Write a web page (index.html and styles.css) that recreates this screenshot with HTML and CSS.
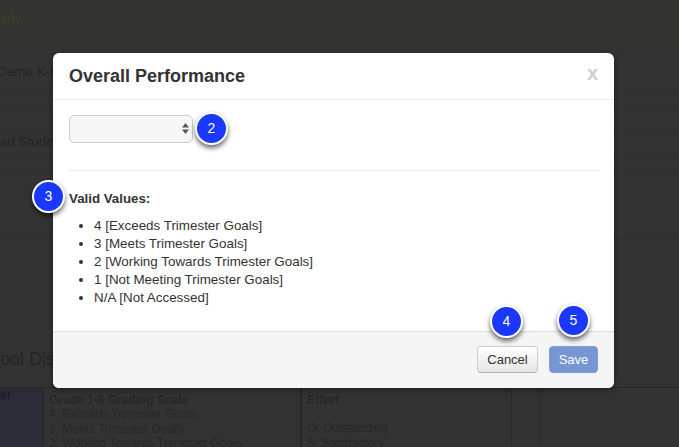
FILE: index.html
```html
<!DOCTYPE html>
<html lang="en">
<head>
  <meta charset="UTF-8" />
  <title>Overall Performance</title>
  <link rel="stylesheet" href="styles.css">
</head>
<body>

  <div class="page">
    <div class="notice">arly.</div>
    <div class="row row-a"><span class="row-text">Demo K-6</span></div>
    <div class="row row-b"></div>
    <div class="row row-c"></div>
    <div class="row row-d">ad Student</div>
    <div class="row row-e"></div>
    <div class="row row-f"></div>
    <div class="district">ool District</div>

    <div class="scale">
      <div class="scale-col scale-first"><b>er</b></div>
      <div class="scale-col">
        <b>Grade 1-6 Grading Scale</b>
        <div>4: Exceeds Trimester Goals</div>
        <div>3: Meets Trimester Goals</div>
        <div>2: Working Towards Trimester Goals</div>
      </div>
      <div class="scale-col scale-effort">
        <b>Effort</b>
        <div class="effort-gap">O: Outstanding</div>
        <div>S: Satisfactory</div>
      </div>
      <div class="scale-col scale-thin"></div>
      <div class="scale-col scale-last"></div>
    </div>
  </div>

  <div class="modal">
    <div class="modal-header">
      <h3>Overall Performance</h3>
      <span class="close">x</span>
    </div>

    <div class="modal-body">
      <div class="select-wrap">
        <select class="value-select"><option></option></select>
        <svg class="select-arrows" width="7" height="11" viewBox="0 0 7 11">
          <path d="M3.5 0L7 4.5H0z" fill="#555" />
          <path d="M3.5 11L0 6.5h7z" fill="#555" />
        </svg>
      </div>
      <hr class="divider" />
      <p class="values-title">Valid Values:</p>
      <ul class="values">
        <li>4 [Exceeds Trimester Goals]</li>
        <li>3 [Meets Trimester Goals]</li>
        <li>2 [Working Towards Trimester Goals]</li>
        <li>1 [Not Meeting Trimester Goals]</li>
        <li>N/A [Not Accessed]</li>
      </ul>
    </div>

    <div class="modal-footer">
      <button class="btn btn-cancel">Cancel</button>
      <button class="btn btn-save">Save</button>
    </div>

    <div class="badge badge-2">2</div>
    <div class="badge badge-3">3</div>
    <div class="badge badge-4">4</div>
    <div class="badge badge-5">5</div>
  </div>

</body>
</html>
```

FILE: styles.css
```css
html, body {
  height: 100%;
}

body {
  font-family: "Liberation Sans", Arial, sans-serif;
  background: #333;
  margin: 0;
  padding: 0;
  overflow: hidden;
  color: #222;
}

.page {
  height: 447px;
  overflow: hidden;
}

.notice {
  height: 55px;
  background: #33332f;
  font-size: 13px;
  line-height: 38px;
  color: #453e30;
  border-bottom: 1px solid #2f2f2f;
  box-sizing: border-box;
}

.row {
  border-bottom: 1px solid #2e2e2e;
  box-sizing: border-box;
  font-size: 13.4px;
  color: #232323;
  white-space: nowrap;
}

.row-text {
  display: inline-block;
  margin-left: -3px;
}

.row-a { height: 35px; line-height: 34px; }
.row-b { height: 19px; }
.row-c { height: 20px; }
.row-d { height: 27px; line-height: 26px; }
.row-e { height: 20px; }
.row-f { height: 62px; }

.district {
  height: 150px;
  box-sizing: border-box;
  padding-top: 107px;
  border-bottom: 1px solid #262626;
  font-size: 18px;
  line-height: 28px;
  color: #252525;
  white-space: nowrap;
}

.scale {
  display: grid;
  grid-template-columns: 44px 257px 211px 29px 1fr;
  height: 60px;
  font-size: 12px;
  line-height: 14.5px;
  color: #272727;
}

.scale-col {
  padding: 6px 5px 0;
  border-right: 1px solid #292929;
  white-space: nowrap;
  overflow: hidden;
}

.scale-col b {
  display: block;
  line-height: 13px;
}

.scale-first {
  background: #2b2c38;
  color: #1c1c1c;
  padding: 1px 0 0;
}

.scale-effort {
  border-left: 1px solid #262626;
}

.effort-gap {
  margin-top: 14px;
}

.scale-last {
  border-right: 0;
}

.modal {
  position: absolute;
  left: 53px;
  top: 53px;
  width: 561px;
  height: 335px;
  display: flex;
  flex-direction: column;
  background: #fff;
  border-radius: 6px;
  box-shadow: 0 2px 6px rgba(0, 0, 0, 0.45);
  color: #333;
}

.modal-header {
  display: flex;
  justify-content: space-between;
  align-items: flex-start;
  height: 47px;
  box-sizing: border-box;
  padding: 0 16px;
  border-bottom: 1px solid #eee;
}

.modal-header h3 {
  margin: 0;
  font-size: 18px;
  line-height: 47px;
  font-weight: bold;
}

.close {
  font-size: 20px;
  line-height: 40px;
  font-weight: bold;
  color: #cfcfcf;
}

.modal-body {
  flex: 1;
  padding: 15px 15px 0 16px;
}

.select-wrap {
  position: relative;
  width: 124px;
  height: 28px;
}

.value-select {
  display: block;
  appearance: none;
  width: 100%;
  height: 100%;
  background: #f6f6f6;
  border: 1px solid #ccc;
  border-radius: 5px;
}

.select-arrows {
  position: absolute;
  right: 4px;
  top: 8px;
}

.divider {
  margin: 27px 0 0;
  border: 0;
  border-top: 1px solid #eee;
}

.values-title {
  margin: 20px 0 0;
  font-size: 13.3px;
  line-height: 16px;
  font-weight: bold;
}

.values {
  margin: 10px 0 0;
  padding-left: 25px;
  font-size: 13.4px;
  line-height: 18px;
}

.modal-footer {
  display: flex;
  justify-content: flex-end;
  align-items: center;
  gap: 11px;
  height: 57px;
  box-sizing: border-box;
  padding: 0 16px 2px;
  background: #f5f5f5;
  border-top: 1px solid #ddd;
  border-radius: 0 0 6px 6px;
}

.btn {
  height: 27px;
  padding: 0;
  font-family: inherit;
  font-size: 13px;
  border-radius: 4px;
}

.btn-cancel {
  width: 61px;
  color: #333;
  background: linear-gradient(#fff, #e6e6e6);
  border: 1px solid #ccc;
  border-bottom-color: #b3b3b3;
}

.btn-save {
  width: 49px;
  color: #fff;
  background: #7595d3;
  border: 1px solid #7f9dd6;
}

.badge {
  position: absolute;
  width: 29px;
  height: 29px;
  background: #1a38ff;
  border: 2px solid #fff;
  border-radius: 50%;
  box-shadow: 0 3px 5px rgba(0, 0, 0, 0.6);
  color: #fff;
  font-size: 14px;
  line-height: 29px;
  text-align: center;
}

.badge-2 { left: 142px; top: 59px; }
.badge-3 { left: -21px; top: 127px; }
.badge-4 { left: 437px; top: 252px; }
.badge-5 { left: 504px; top: 251px; }
```
